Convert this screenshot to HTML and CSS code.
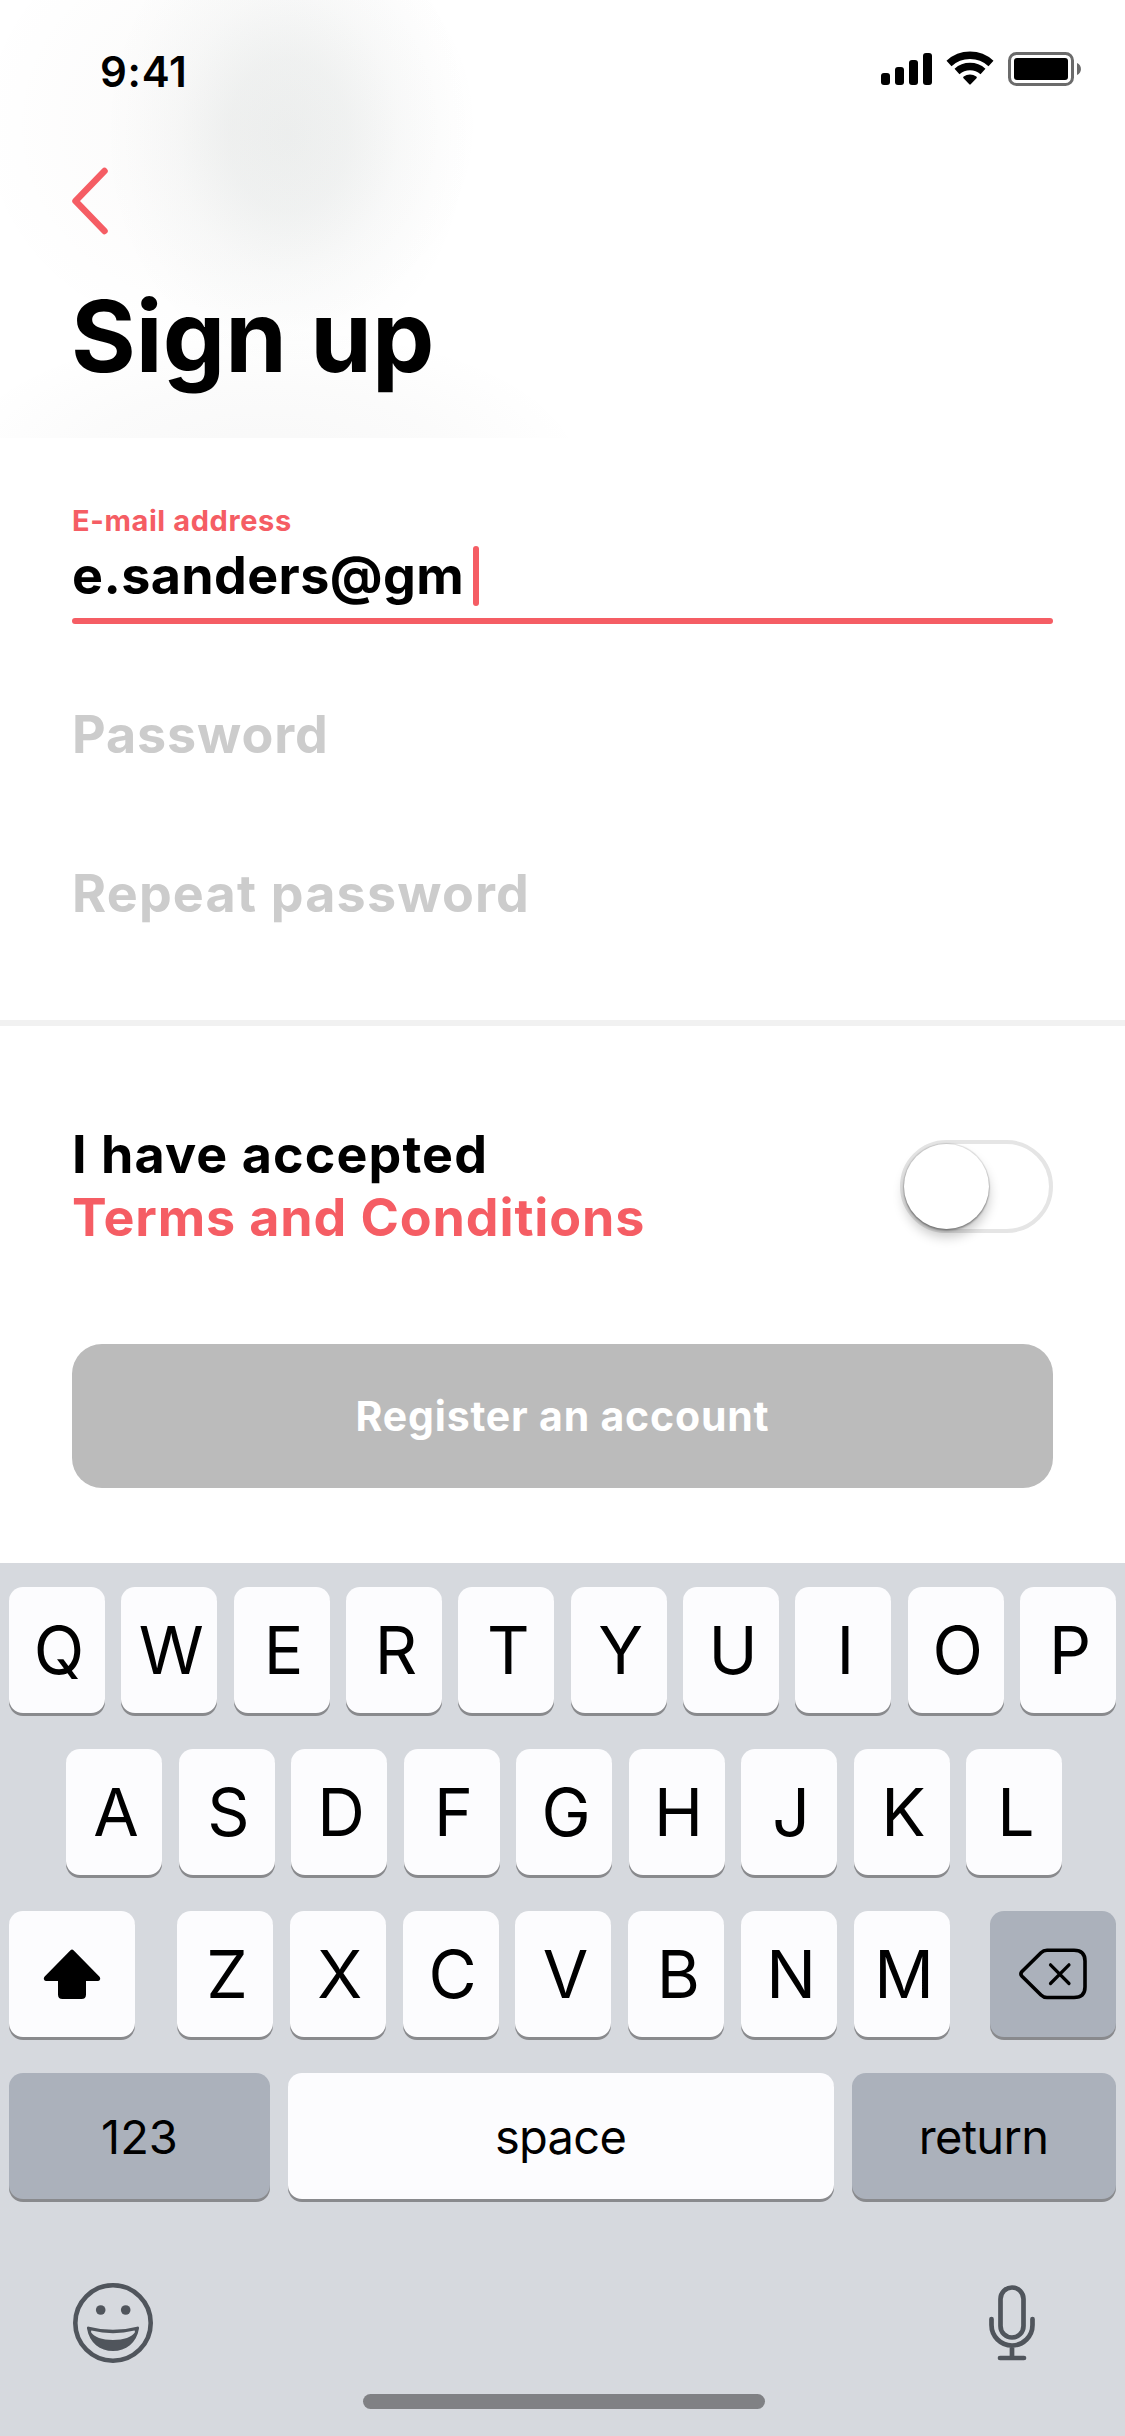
FILE: index.html
```html
<!DOCTYPE html>
<html lang="en">
<head>
<meta charset="utf-8">
<title>Sign up</title>
<link rel="stylesheet" href="styles.css">
</head>
<body>
<main class="screen">
  <header class="header">
    <div class="status">
      <span class="time">9:41</span>
      <svg class="status-icons" width="202" height="36" viewBox="880 51 202 36">
        <rect x="881" y="73" width="9" height="12" rx="3"/>
        <rect x="895" y="67" width="9" height="18" rx="3"/>
        <rect x="909" y="60" width="9" height="25" rx="3"/>
        <rect x="923" y="53" width="9" height="32" rx="3"/>
        <g fill="none" stroke="#000" stroke-width="7.400">
          <path d="M949 63.500A31 31 0 0 1 991 63.500"/>
          <path d="M957 71.500A19.500 19.500 0 0 1 983 71.500"/>
        </g>
        <path d="M963.500 78.300Q962.600 77.300 963.700 76.500A10.500 10.500 0 0 1 976.300 76.500Q977.400 77.300 976.500 78.300L970.700 84.300Q970 85 969.300 84.300Z"/>
        <rect x="1009.500" y="53.500" width="63" height="31" rx="7" fill="none" stroke="#6b6b6b" stroke-width="3"/>
        <rect x="1014" y="58" width="54" height="22" rx="3"/>
        <path d="M1077 63C1082.300 65 1082.300 73 1077 75Z" fill="#6b6b6b"/>
      </svg>
    </div>
    <svg class="back" width="36" height="68" viewBox="0 0 36 68" fill="none" stroke="#f55d64" stroke-width="6.500" stroke-linecap="round" stroke-linejoin="round"><path d="M32.500 4L3.500 34L32.500 64"/></svg>
    <h1 class="title">Sign up</h1>
  </header>

  <section class="form">
    <div class="field active">
      <div class="label">E-mail address</div>
      <div class="value">e.sanders@gm<span class="caret"></span></div>
      <div class="underline"></div>
    </div>
    <div class="field">Password</div>
    <div class="field">Repeat password</div>
  </section>

  <section class="consent">
    <div class="terms">
      <p>I have accepted<br><a class="link">Terms and Conditions</a></p>
      <span class="toggle"><span class="knob"></span></span>
    </div>
    <button class="register">Register an account</button>
  </section>

  <section class="keyboard">
    <div class="row row-1">
      <span class="key">Q</span><span class="key">W</span><span class="key">E</span><span class="key">R</span><span class="key">T</span><span class="key">Y</span><span class="key">U</span><span class="key">I</span><span class="key">O</span><span class="key">P</span>
    </div>
    <div class="row row-2">
      <span class="key">A</span><span class="key">S</span><span class="key">D</span><span class="key">F</span><span class="key">G</span><span class="key">H</span><span class="key">J</span><span class="key">K</span><span class="key">L</span>
    </div>
    <div class="row row-3">
      <span class="key side"><svg width="58" height="50" viewBox="0 0 58 50"><path d="M27.500 1.200Q29 -.2 30.500 1.200L56.300 27.500Q57.600 29 57 30.500Q56.500 32 54.500 32H43V45.500Q43 50 38.500 50H19.500Q15 50 15 45.500V32H3.500Q1.500 32 1 30.500Q.4 29 1.700 27.500Z"/></svg></span>
      <div class="letters"><span class="key">Z</span><span class="key">X</span><span class="key">C</span><span class="key">V</span><span class="key">B</span><span class="key">N</span><span class="key">M</span></div>
      <span class="key side dark"><svg width="68" height="52" viewBox="0 0 68 52" fill="none" stroke="#000" stroke-width="3.600" stroke-linecap="round" stroke-linejoin="round"><path d="M28 2.200H55Q66 2.200 66 13V39Q66 49.500 55 49.500H28Q24.500 49.500 22 47L3 28.300Q.8 26 3 23.500L22 4.700Q24.500 2.200 28 2.200Z"/><path d="M31.500 16.800L50 35.500M50 16.800L31.500 35.500" stroke-width="3.200"/></svg></span>
    </div>
    <div class="row row-4">
      <span class="key word dark">123</span><span class="key word tight">space</span><span class="key word tight dark">return</span>
    </div>
    <div class="tools">
      <svg width="80" height="80" viewBox="0 0 80 80" fill="#50555c"><circle cx="40" cy="40" r="37.700" fill="none" stroke="#50555c" stroke-width="4.600"/><circle cx="27.700" cy="27" r="4.800"/><circle cx="52.700" cy="27" r="4.800"/><path fill-rule="evenodd" d="M14 45.500Q13.500 43 16 43.700Q40 50 64 43.700Q66.500 43 66 45.500C63.500 60 53 68 40 68S16.500 60 14 45.500ZM18.500 47.500Q17.800 47.500 18.200 49.500C21 54 29 57 40 57S59 54 61.800 49.500Q62.200 47.500 61.500 47.500Q40 52.800 18.500 47.500Z"/></svg>
      <svg width="46" height="76" viewBox="0 0 46 76" fill="none" stroke="#50555c" stroke-width="4.700" stroke-linecap="round"><rect x="11.500" y="2.500" width="23" height="50" rx="11.500"/><path d="M2.500 34V40A20.500 20.500 0 0 0 43.500 40V34M23 61V72M11 73H35"/></svg>
    </div>
    <div class="home"></div>
  </section>
</main>
</body>
</html>
```

FILE: styles.css
```css
* {
  box-sizing: border-box;
}

body {
  margin: 0;
  background: #fff;
  font-family: Inter, "Liberation Sans", sans-serif;
  color: #000;
}

.screen {
  width: 1125px;
  height: 2436px;
  display: flex;
  flex-direction: column;
  overflow: hidden;
}

.header {
  height: 438px;
  background:
    radial-gradient(ellipse 185px 235px at 288px 135px, rgba(25, 55, 50, .068), rgba(25, 55, 50, .053) 32%, rgba(25, 55, 50, .024) 60%, rgba(25, 55, 50, .007) 84%, transparent),
    radial-gradient(ellipse 260px 230px at 230px 125px, rgba(70, 50, 35, .022), rgba(70, 50, 35, .012) 60%, transparent),
    radial-gradient(ellipse 325px 145px at 265px 470px, rgba(45, 45, 42, .035), rgba(50, 50, 45, .018) 58%, transparent);
  background-color: #fff;
}

.status {
  height: 168px;
  padding: 46px 43px 0 100px;
  display: flex;
  justify-content: space-between;
  align-items: flex-start;
}

.time {
  font-size: 42px;
  line-height: 51px;
  font-weight: 600;
  letter-spacing: .7px;
}

.status-icons {
  margin-top: 5px;
}

.back {
  display: block;
  margin-left: 72px;
  margin-top: -1px;
}

.title {
  margin: 41px 0 0 71px;
  font-size: 99px;
  line-height: 120px;
  font-weight: 700;
}

.form {
  height: 588px;
  padding: 64px 72px 0;
  border-bottom: 6px solid #f1f1f1;
}

.field {
  height: 159px;
  font-size: 52px;
  line-height: 62px;
  font-weight: 700;
  letter-spacing: .9px;
  color: #ccc;
}

.field:last-child {
  letter-spacing: 1.2px;
}

.field.active {
  height: 122px;
  margin-bottom: 80px;
  color: #000;
}

.label {
  font-size: 29px;
  line-height: 38px;
  letter-spacing: .6px;
  color: #f55d64;
}

.value {
  display: flex;
  align-items: center;
  height: 72px;
  letter-spacing: .4px;
}

.caret {
  width: 6px;
  height: 60px;
  margin-left: 9px;
  border-radius: 3px;
  background: #f55d64;
}

.underline {
  height: 6px;
  margin-top: 6px;
  border-radius: 3px;
  background: #f55d64;
}

.consent {
  height: 537px;
  padding: 98px 72px 0;
}

.terms {
  height: 220px;
  display: flex;
  justify-content: space-between;
  align-items: flex-start;
}

.terms p {
  margin: -1px 0 0;
  font-size: 52px;
  line-height: 63px;
  font-weight: 700;
  letter-spacing: 1.1px;
}

.link {
  color: #f55d64;
  letter-spacing: .87px;
}

.toggle {
  width: 153px;
  height: 93px;
  margin-top: 16px;
  border: 4px solid #e5e5e5;
  border-radius: 47px;
}

.knob {
  display: block;
  width: 85px;
  height: 85px;
  border-radius: 50%;
  background: #fff;
  box-shadow: 0 0 1px 1px rgba(0, 0, 0, .12), 0 2px 2px rgba(0, 0, 0, .28), 0 8px 12px rgba(0, 0, 0, .22);
}

.register {
  display: block;
  width: 100%;
  height: 144px;
  border: 0;
  border-radius: 30px;
  background: #bbb;
  color: #fff;
  font: 700 41px Inter, "Liberation Sans", sans-serif;
  letter-spacing: .8px;
}

.keyboard {
  flex: 1;
  padding: 24px 9px 0;
  background: #d6d9de;
}

.row {
  height: 126px;
  margin-bottom: 36px;
  display: flex;
  justify-content: space-between;
}

.row-2 {
  padding: 0 54px 0 57px;
}

.letters {
  width: 773px;
  display: flex;
  justify-content: space-between;
  margin-left: 2px;
}

.key {
  width: 96px;
  height: 126px;
  padding-left: 4px;
  display: flex;
  align-items: center;
  justify-content: center;
  border-radius: 14px;
  background: #fcfcfe;
  box-shadow: 0 3px 0 #898a8d;
  font-size: 66px;
}

.side {
  width: 126px;
  padding: 0;
}

.dark {
  background: #abb1bb;
}

.row-4 {
  display: grid;
  grid-template-columns: 261px 546px 264px;
}

.word {
  width: auto;
  padding: 1px 0 0;
  font-size: 47px;
}

.tight {
  padding-right: 1px;
  letter-spacing: -.7px;
}

.tools {
  height: 80px;
  margin: 84px 81px 0 64px;
  display: flex;
  justify-content: space-between;
  align-items: center;
}

.home {
  width: 402px;
  height: 15px;
  margin: 31px 0 0 354px;
  border-radius: 8px;
  background: #808184;
}
```
